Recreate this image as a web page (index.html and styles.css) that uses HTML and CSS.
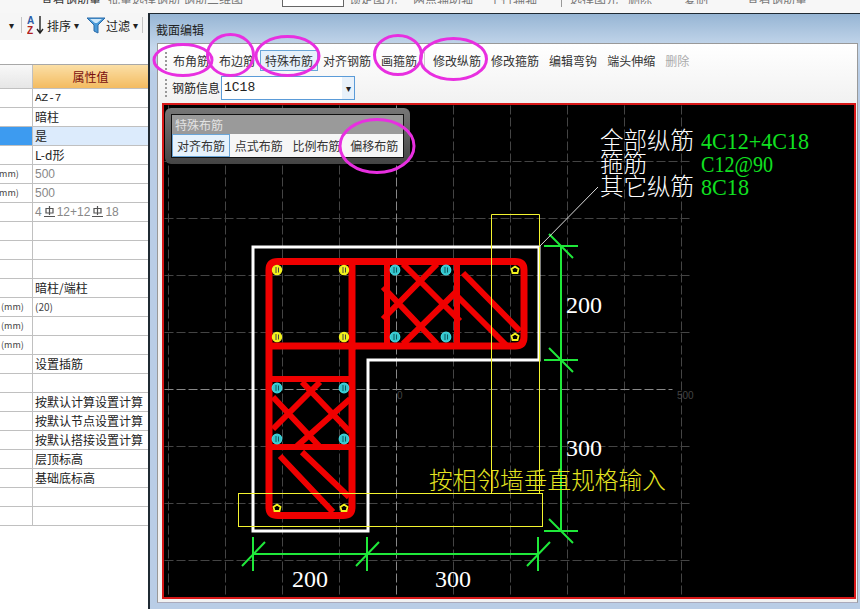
FILE: index.html
```html
<!DOCTYPE html>
<html lang="zh-CN">
<head>
  <meta charset="UTF-8">
  <meta name="viewport" content="width=device-width, initial-scale=1.0">
  <title>截面编辑</title>
  <link rel="stylesheet" href="styles.css">
</head>
<body>
  <!-- main toolbar, only its lower edge is in view -->
  <div class="topbar">
    <span class="top-item t1">查看钢筋量</span>
    <span class="top-item t2">批量选择钢筋</span>
    <span class="top-item t3">钢筋三维图</span>
    <span class="top-box"></span>
    <span class="top-item t4">锁定图元</span>
    <span class="top-item t5">两点辅助轴</span>
    <span class="top-item t6">平行辅轴</span>
    <span class="top-sep"></span>
    <span class="top-item t7">选择图元</span>
    <span class="top-item t8">删除</span>
    <span class="top-item t9">复制</span>
    <span class="top-item t10">查看钢筋量</span>
  </div>

  <div class="main">
    <div class="left">
      <div class="tools">
        <span class="drop">▾</span>
        <span class="tool-sep sep-a"></span>
        <svg class="az" width="17" height="20" viewBox="0 0 17 20">
          <text x="0" y="9" class="az-a">A</text>
          <text x="0" y="19" class="az-z">Z</text>
          <path d="M13 1V17M10 14L13 18L16 14" fill="none" stroke="#222" stroke-width="1.4"/>
        </svg>
        <span class="tool-label">排序</span>
        <span class="drop">▾</span>
        <svg class="funnel" width="20" height="17" viewBox="0 0 20 17">
          <path d="M1 1H19L12 8V16L8 14V8Z" fill="#4a9ad8" stroke="#2a6aa8"/>
          <path d="M4 2H16L11 6H9Z" fill="#cfe8fa"/>
        </svg>
        <span class="tool-label">过滤</span>
        <span class="drop">▾</span>
        <span class="tool-sep sep-b"></span>
      </div>
      <div class="gap"></div>
      <table class="props">
        <thead>
          <tr><th></th><th class="value-head">属性值</th></tr>
        </thead>
        <tbody>
          <tr><td></td><td class="mono">AZ-7</td></tr>
          <tr><td></td><td>暗柱</td></tr>
          <tr class="current"><td></td><td>是</td></tr>
          <tr><td></td><td>L-d形</td></tr>
          <tr class="muted"><td class="unit cut">(mm)</td><td>500</td></tr>
          <tr class="muted"><td class="unit cut">(mm)</td><td>500</td></tr>
          <tr class="muted"><td></td><td>4<svg class="steel" width="13" height="12" viewBox="0 0 13 12"><path d="M3 2.5H10V7H3ZM6.5 0V9M1 10.5H12" fill="none" stroke="#555" stroke-width="1.2"/></svg>12+12<svg class="steel" width="13" height="12" viewBox="0 0 13 12"><path d="M3 2.5H10V7H3ZM6.5 0V9M1 10.5H12" fill="none" stroke="#555" stroke-width="1.2"/></svg>18</td></tr>
          <tr><td></td><td></td></tr>
          <tr><td></td><td></td></tr>
          <tr><td></td><td></td></tr>
          <tr><td></td><td>暗柱/端柱</td></tr>
          <tr><td class="unit">(mm)</td><td class="small">(20)</td></tr>
          <tr><td class="unit">(mm)</td><td></td></tr>
          <tr><td class="unit">(mm)</td><td></td></tr>
          <tr><td></td><td>设置插筋</td></tr>
          <tr><td></td><td></td></tr>
          <tr><td></td><td>按默认计算设置计算</td></tr>
          <tr><td></td><td>按默认节点设置计算</td></tr>
          <tr><td></td><td>按默认搭接设置计算</td></tr>
          <tr><td></td><td>层顶标高</td></tr>
          <tr><td></td><td>基础底标高</td></tr>
          <tr><td></td><td></td></tr>
          <tr><td></td><td></td></tr>
        </tbody>
      </table>
    </div>

    <div class="dialog">
      <div class="dialog-title">截面编辑</div>
      <div class="panel">
        <div class="toolbar row-one">
          <span class="grip"></span>
          <span class="btn">布角筋</span>
          <span class="btn">布边筋</span>
          <span class="btn active">特殊布筋</span>
          <span class="btn">对齐钢筋</span>
          <span class="btn">画箍筋</span>
          <span class="bar-sep"></span>
          <span class="btn">修改纵筋</span>
          <span class="btn">修改箍筋</span>
          <span class="btn">编辑弯钩</span>
          <span class="btn">端头伸缩</span>
          <span class="btn off">删除</span>
        </div>
        <div class="toolbar row-two">
          <span class="grip"></span>
          <span class="field-label">钢筋信息</span>
          <div class="combo">
            <span class="combo-text">1C18</span>
            <span class="combo-arrow">▾</span>
          </div>
        </div>
        <div class="canvas">
          <div class="float-box">
            <div class="float-inner">
              <div class="float-title">特殊布筋</div>
              <div class="float-btns">
                <span class="fbtn active">对齐布筋</span>
                <span class="fbtn">点式布筋</span>
                <span class="fbtn">比例布筋</span>
                <span class="fbtn">偏移布筋</span>
              </div>
            </div>
          </div>
          <svg class="drawing" width="692" height="492" viewBox="164 106 692 492">
            <defs>
              <g id="bar-yellow"><circle r="4.5" fill="#f2f21e" stroke="#f2f21e" stroke-width="1.4"/><path d="M-1 -3V3M1.5 -2.500V2.500" stroke="#444" stroke-width="1"/></g>
              <g id="bar-cyan"><circle r="4.8" fill="#35c4cc" stroke="#3fd8e0" stroke-width="1.200"/><path d="M-1 -3V3M1.500 -2.500V2.500" stroke="#0a5a60" stroke-width="1"/></g>
              <g id="bar-small"><path d="M0 -3.500L3.500 -1L2.500 3H-2.500L-3.500 -1Z" fill="#000" stroke="#f2f21e" stroke-width="1.800"/></g>
            </defs>

            <!-- grid -->
            <g transform="translate(0.5 0.5)">
              <path class="grid" d="M168 106V598M225 106V598M282 106V598M339 106V598M453 106V598M510 106V598M567 106V598M624 106V598M681 106V598"/>
              <path class="grid" d="M164 162H690M164 219H690M164 276H690M164 333H690M164 447H690M164 504H690M164 561H690"/>
              <path class="grid axis" d="M396 106V598M164 390H672"/>
            </g>
            <text x="397" y="400" class="grid-num">0</text>
            <text x="677" y="400" class="grid-num">500</text>

            <!-- section outline -->
            <path class="outline" d="M253 248H539V361H368V532H253Z"/>

            <!-- stirrups -->
            <g class="rebar">
              <path class="hoop" d="M278 262.500H515Q524 262.500 524 271V338Q524 347 515 347H352V508Q352 516.500 343 516.500H278Q269 516.500 269 508V271Q269 262.500 278 262.500Z"/>
              <path class="hoop" d="M269 347H352V262"/>
              <path class="leg" d="M387 262V347M457 262V347M269 380H352M269 448H352"/>
              <path class="tie" d="M383 288L437 345M403 265L460 322M437 265L383 320M457 292L403 345"/>
              <path class="tie" d="M463 274L520 332M458 298L507 347"/>
              <path class="tie" d="M273 398L320 448M302 383L350 433M320 383L273 430M350 400L297 447"/>
              <path class="tie" d="M280 457L333 513M302 453L349 498"/>
            </g>

            <!-- bars -->
            <use href="#bar-yellow" x="277" y="271"/>
            <use href="#bar-yellow" x="344" y="271"/>
            <use href="#bar-yellow" x="277" y="338"/>
            <use href="#bar-yellow" x="344" y="338"/>
            <use href="#bar-cyan" x="395" y="271"/>
            <use href="#bar-cyan" x="446" y="271"/>
            <use href="#bar-cyan" x="395" y="338"/>
            <use href="#bar-cyan" x="446" y="338"/>
            <use href="#bar-cyan" x="277" y="389"/>
            <use href="#bar-cyan" x="344" y="389"/>
            <use href="#bar-cyan" x="277" y="440"/>
            <use href="#bar-cyan" x="344" y="440"/>
            <use href="#bar-small" x="515" y="271"/>
            <use href="#bar-small" x="515" y="338"/>
            <use href="#bar-small" x="277" y="509"/>
            <use href="#bar-small" x="344" y="509"/>

            <!-- wall thickness guides -->
            <g transform="translate(0.5 0.5)">
              <path class="guide" d="M491 494V215H539V494"/>
              <rect class="guide" x="238" y="494" width="304" height="33"/>
            </g>

            <!-- dimensions -->
            <path class="dim" d="M561 246V533M544 247H578M544 361H578M544 532H578M549 235L573 259M549 349L573 373M549 520L573 544"/>
            <path class="dim" d="M253 555H538M253 538V572M367 538V572M538 538V572M242 567L265 543M356 567L379 543M527 567L550 543"/>
            <path class="leader" d="M539 248L598 188"/>

            <text x="566" y="314" class="dim-text">200</text>
            <text x="566" y="457" class="dim-text">300</text>
            <text x="292" y="588" class="dim-text">200</text>
            <text x="435" y="588" class="dim-text">300</text>

            <!-- summary -->
            <text x="600" y="150" class="note">全部纵筋</text>
            <text x="600" y="173" class="note">箍筋</text>
            <text x="600" y="196" class="note">其它纵筋</text>
            <text x="701" y="150" class="note-val" textLength="108" lengthAdjust="spacingAndGlyphs">4C12+4C18</text>
            <text x="701" y="173" class="note-val" textLength="72" lengthAdjust="spacingAndGlyphs">C12@90</text>
            <text x="701" y="196" class="note-val" textLength="48" lengthAdjust="spacingAndGlyphs">8C18</text>
            <text x="429" y="490" class="hint">按相邻墙垂直规格输入</text>
          </svg>
        </div>
      </div>
    </div>
  </div>

  <!-- marker rings drawn on top of the screenshot -->
  <svg class="marks" width="860" height="609" viewBox="0 0 860 609">
    <ellipse cx="183" cy="60" rx="29" ry="15.500"/>
    <ellipse cx="230.500" cy="55" rx="23" ry="20.500"/>
    <ellipse cx="287.500" cy="56" rx="31.500" ry="19.500"/>
    <ellipse cx="398" cy="55" rx="23.500" ry="19.500"/>
    <ellipse cx="453.500" cy="59" rx="33" ry="20.500"/>
    <ellipse cx="377" cy="146" rx="37" ry="26.500"/>
  </svg>
</body>
</html>
```

FILE: styles.css
```css
html {
  font-size: 12px;
}

body {
  margin: 0;
  width: 860px;
  height: 609px;
  overflow: hidden;
  position: relative;
  background-color: #fff;
  color: #222;
  font-family: "Noto Sans CJK SC", "Liberation Sans", sans-serif;
  font-size: 12px;
}

/* top strip */
.topbar {
  height: 13px;
  position: relative;
  overflow: hidden;
  background-color: #f7f7f7;
}

.top-item {
  position: absolute;
  top: -10px;
  line-height: 17px;
  height: 14px;
  overflow: hidden;
  color: #777;
  white-space: nowrap;
}

.t1 { left: 41px; color: #333; }
.t2 { left: 108px; }
.t3 { left: 183px; }
.t4 { left: 349px; }
.t5 { left: 413px; }
.t6 { left: 489px; }
.t7 { left: 570px; }
.t8 { left: 628px; }
.t9 { left: 684px; }
.t10 { left: 747px; }

.top-box {
  position: absolute;
  left: 282px;
  top: -10px;
  width: 60px;
  height: 15px;
  border: 1px solid #666;
  background-color: #fff;
}

.top-sep {
  position: absolute;
  left: 561px;
  top: 0;
  width: 1px;
  height: 7px;
  background-color: #999;
}

.main {
  display: flex;
  height: 596px;
}

/* left property list */
.left {
  width: 148px;
  flex-shrink: 0;
  overflow: hidden;
}

.tools {
  height: 27px;
  box-sizing: border-box;
  padding-bottom: 3px;
  display: flex;
  align-items: center;
  background-color: #f6f6f6;
}

.tools .drop:first-child {
  margin-left: 9px;
}

.drop {
  font-size: 10px;
  line-height: 10px;
  color: #222;
}

.tool-sep {
  width: 1px;
  height: 16px;
  background-color: #c4c4c4;
}

.sep-a {
  margin-left: 7px;
  margin-right: 5px;
}

.sep-b {
  margin-left: 4px;
}

.az-a,
.az-z {
  font-family: "Liberation Sans", sans-serif;
  font-size: 10px;
  font-weight: bold;
}

.az-a { fill: #2a5ca8; }
.az-z { fill: #b02020; }

.tool-label {
  margin-left: 3px;
  margin-right: 3px;
  font-size: 12px;
}

.funnel {
  margin-left: 7px;
}

.funnel + .tool-label {
  margin-left: 0;
}

.gap {
  height: 24px;
  background-color: #fff;
  border-bottom: 1px solid #a8a8a8;
}

.props {
  width: 148px;
  table-layout: fixed;
  border-collapse: collapse;
}

.props th {
  height: 23px;
  padding: 0;
  font-weight: normal;
  background: linear-gradient(#f8f8f8, #e6e6e6);
  border-right: 1px solid #c0c0c0;
  border-bottom: 1px solid #c0c0c0;
}

.props th:first-child {
  width: 32px;
}

.props th.value-head {
  background: linear-gradient(#fbdfa6, #f3bb60);
  color: #7a0e0e;
  border-right: none;
}

.props td {
  height: 18px;
  padding: 0 0 0 2px;
  line-height: 18px;
  white-space: nowrap;
  overflow: hidden;
  border-right: 1px solid #c0c0c0;
  border-bottom: 1px solid #c0c0c0;
}

.props td:last-child {
  border-right: none;
}

.props td.unit {
  padding-left: 1px;
  font-size: 9px;
  color: #444;
}

.props td.cut {
  padding-left: 0;
  text-indent: -4px;
}

.props td.mono {
  font-family: "Liberation Mono", monospace;
  font-size: 11px;
}

.props td.small {
  font-size: 10px;
  color: #444;
}

.current td:first-child {
  background-color: #3d9bf0;
}

.current td {
  background-color: #dcebfc;
}

.muted td:last-child {
  color: #888;
  font-family: "Liberation Sans", sans-serif;
}

.steel {
  margin: 0 1px;
  vertical-align: -2px;
}

/* section dialog */
.dialog {
  flex: 1;
  min-width: 0;
  display: flex;
  flex-direction: column;
  border-left: 2px solid #1f2a33;
  border-top: 1px solid #1f2a33;
  background: linear-gradient(#96b5d4 0, #c6d8ec 34px, #b9cde6 60px);
}

.dialog-title {
  height: 29px;
  padding: 5px 0 0 6px;
  box-sizing: border-box;
  line-height: 22px;
  color: #222;
}

.panel {
  width: 701px;
  height: 560px;
  margin-left: 7px;
  box-sizing: border-box;
  border: 1px solid #999;
  border-bottom-color: #aab;
  padding: 0 2px 0 4px;
  background: linear-gradient(#fff, #f1f1f1 60px);
}

.toolbar {
  display: flex;
  align-items: center;
  margin-left: -4px;
}

.row-one {
  height: 31px;
  padding-top: 2px;
  box-sizing: border-box;
}

.row-two {
  height: 29px;
  padding-bottom: 4px;
  box-sizing: border-box;
}

.grip {
  width: 2px;
  height: 18px;
  margin-left: 7px;
  margin-right: 1px;
  background-image: linear-gradient(#999 50%, transparent 50%);
  background-size: 2px 4px;
}

.btn {
  height: 21px;
  box-sizing: border-box;
  padding: 0 4px;
  border: 1px solid transparent;
  line-height: 19px;
  color: #333;
}

.btn.active {
  border-color: #6aa6d8;
  background-color: #e6f1fb;
}

.btn.off {
  color: #aaa;
}

.bar-sep {
  width: 1px;
  height: 18px;
  margin: 0 3px 0 2px;
  background-color: #ccc;
}

.field-label {
  margin-left: 4px;
  margin-right: 1px;
}

.combo {
  width: 134px;
  height: 24px;
  box-sizing: border-box;
  border: 1px solid #5a9bd8;
  background-color: #fff;
  display: flex;
  align-items: center;
  justify-content: space-between;
}

.combo-text {
  margin-left: 2px;
  font-family: "Liberation Mono", monospace;
  font-size: 13px;
}

.combo-arrow {
  width: 12px;
  height: 22px;
  line-height: 22px;
  text-align: center;
  font-size: 10px;
  background-color: #e8f1fa;
}

.canvas {
  position: relative;
  width: 694px;
  height: 496px;
  box-sizing: border-box;
  margin-top: -1px;
  border: 2px solid #d81818;
  background-color: #000;
}

.drawing {
  display: block;
}

.float-box {
  position: absolute;
  z-index: 1;
  left: 1px;
  top: 3px;
  width: 245px;
  height: 56px;
  box-sizing: border-box;
  padding: 6px;
  border-radius: 6px;
  background: linear-gradient(#777, #444);
}

.float-inner {
  border: 1px solid #111;
  height: 44px;
  box-sizing: border-box;
}

.float-title {
  height: 19px;
  padding-left: 3px;
  line-height: 19px;
  color: #e2e2e2;
  background-color: #9a9a9a;
}

.float-btns {
  display: flex;
  height: 23px;
  background-color: #f6f6f6;
}

.fbtn {
  width: 58px;
  box-sizing: border-box;
  padding-left: 4px;
  border: 1px solid transparent;
  line-height: 21px;
  color: #333;
}

.fbtn.active {
  border-color: #6aa6d8;
  background-color: #e6f2fc;
}

/* drawing strokes */
.grid {
  fill: none;
  stroke: #444;
  stroke-dasharray: 9 3;
}

.grid.axis {
  stroke: #888;
}

.grid-num {
  font-family: "Liberation Sans", sans-serif;
  font-size: 10px;
  fill: #444;
}

.outline {
  fill: none;
  stroke: #fff;
  stroke-width: 3;
}

.hoop,
.leg,
.tie {
  fill: none;
  stroke: #f00000;
}

.hoop { stroke-width: 7; }
.leg { stroke-width: 6; }
.tie { stroke-width: 6; }

.guide {
  fill: none;
  stroke: #f4f430;
}

.dim {
  fill: none;
  stroke: #1fe83a;
  stroke-width: 2;
}

.leader {
  stroke: #ddd;
}

.dim-text {
  font-family: "Liberation Serif", serif;
  font-size: 24px;
  fill: #fff;
}

.note {
  font-size: 23.500px;
  font-weight: 300;
  fill: #fff;
}

.note-val {
  font-family: "Liberation Serif", serif;
  font-size: 24px;
  fill: #10e020;
}

.hint {
  font-size: 23.700px;
  font-weight: 300;
  fill: #e4e420;
}

/* magenta rings */
.marks {
  position: absolute;
  z-index: 2;
  left: 0;
  top: 0;
  pointer-events: none;
}

.marks ellipse {
  fill: none;
  stroke: #e82fe0;
  stroke-width: 3;
}
```
